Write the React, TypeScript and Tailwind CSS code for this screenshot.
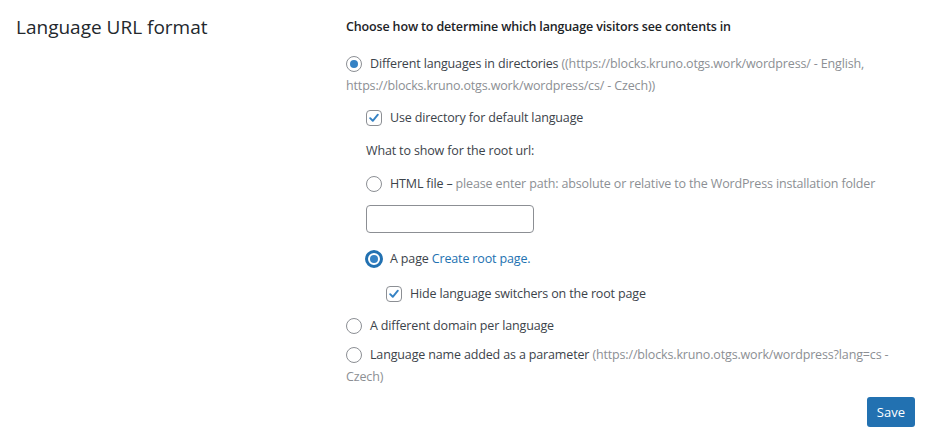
import { ReactNode } from 'react';

const FONT = "font-['Open_Sans',_'Noto_Sans',_sans-serif]";

function Radio({ checked = false, focused = false }: { checked?: boolean; focused?: boolean }) {
  if (focused) {
    return (
      <span className="-ml-[1px] mr-[7px] mt-[2px] inline-flex h-[18px] w-[18px] shrink-0 items-center justify-center rounded-full border-[3px] border-[#2271b1] bg-white align-top">
        <span className="h-[8px] w-[8px] rounded-full bg-[#3582c4]" />
      </span>
    );
  }
  return (
    <span className="mr-[8px] mt-[3px] inline-flex h-[16px] w-[16px] shrink-0 items-center justify-center rounded-full border border-[#8c8f94] bg-white align-top">
      {checked && <span className="h-[8px] w-[8px] rounded-full bg-[#3582c4]" />}
    </span>
  );
}

function Checkbox() {
  return (
    <span className="mr-[8px] mt-[3px] inline-flex h-[16px] w-[16px] shrink-0 items-center justify-center rounded-[4px] border border-[#8c8f94] bg-white align-top">
      <svg viewBox="0 0 16 16" className="h-[16px] w-[16px]">
        <path d="M3.6 8.2 L6.6 11.2 L12.4 4.2" fill="none" stroke="#3582c4" strokeWidth="2.2" strokeLinecap="round" strokeLinejoin="round" />
      </svg>
    </span>
  );
}

function Row({ className = '', children }: { className?: string; children: ReactNode }) {
  return <div className={`whitespace-nowrap leading-[22px] ${className}`}>{children}</div>;
}

export default function App() {
  return (
    <div className={`${FONT} flex min-h-[445px] w-full bg-white text-[12.5px] tracking-[-0.15px] text-[#3c434a]`}>
      {/* Left column: setting title */}
      <div className="w-[346px] shrink-0 pl-[16px] pt-[14px]">
        <h2 className="text-[19px] font-normal leading-[26px] tracking-normal text-[#23282d]">Language URL format</h2>
      </div>

      {/* Right column: options */}
      <div className="flex flex-1 flex-col pr-[24px] pt-[16px]">
        <Row className="font-semibold text-[#1d2327]">Choose how to determine which language visitors see contents in</Row>

        <Row className="mt-[15px]">
          <Radio checked />
          Different languages in directories{' '}
          <span className="text-[#8c8f94]">
            ((https://blocks.kruno.otgs.work/wordpress/ - English,
            <br />
            https://blocks.kruno.otgs.work/wordpress/cs/ - Czech))
          </span>
        </Row>

        <div className="pl-[20px]">
          <Row className="mt-[10px]">
            <Checkbox />
            Use directory for default language
          </Row>

          <Row className="mt-[11px]">What to show for the root url:</Row>

          <Row className="mt-[11px]">
            <Radio />
            HTML file –{' '}
            <span className="text-[#8c8f94]">please enter path: absolute or relative to the WordPress installation folder</span>
          </Row>

          <input
            type="text"
            className="mt-[10px] block h-[28px] w-[168px] rounded-[4px] border border-[#8c8f94] bg-white px-2 outline-none"
          />

          <Row className="mt-[15px]">
            <Radio focused />
            A page <span className="text-[#2271b1]">Create root page.</span>
          </Row>

          <Row className="mt-[13px] pl-[20px]">
            <Checkbox />
            Hide language switchers on the root page
          </Row>
        </div>

        <Row className="mt-[10px]">
          <Radio />
          A different domain per language
        </Row>

        <Row className="mt-[7px]">
          <Radio />
          Language name added as a parameter{' '}
          <span className="text-[#8c8f94]">
            (https://blocks.kruno.otgs.work/wordpress?lang=cs -
            <br />
            Czech)
          </span>
        </Row>

        <div className="mt-[9px] flex justify-end">
          <button className="h-[30px] rounded-[3px] bg-[#2271b1] px-[10px] text-[13px] leading-[28px] tracking-normal text-white">
            Save
          </button>
        </div>
      </div>
    </div>
  );
}
